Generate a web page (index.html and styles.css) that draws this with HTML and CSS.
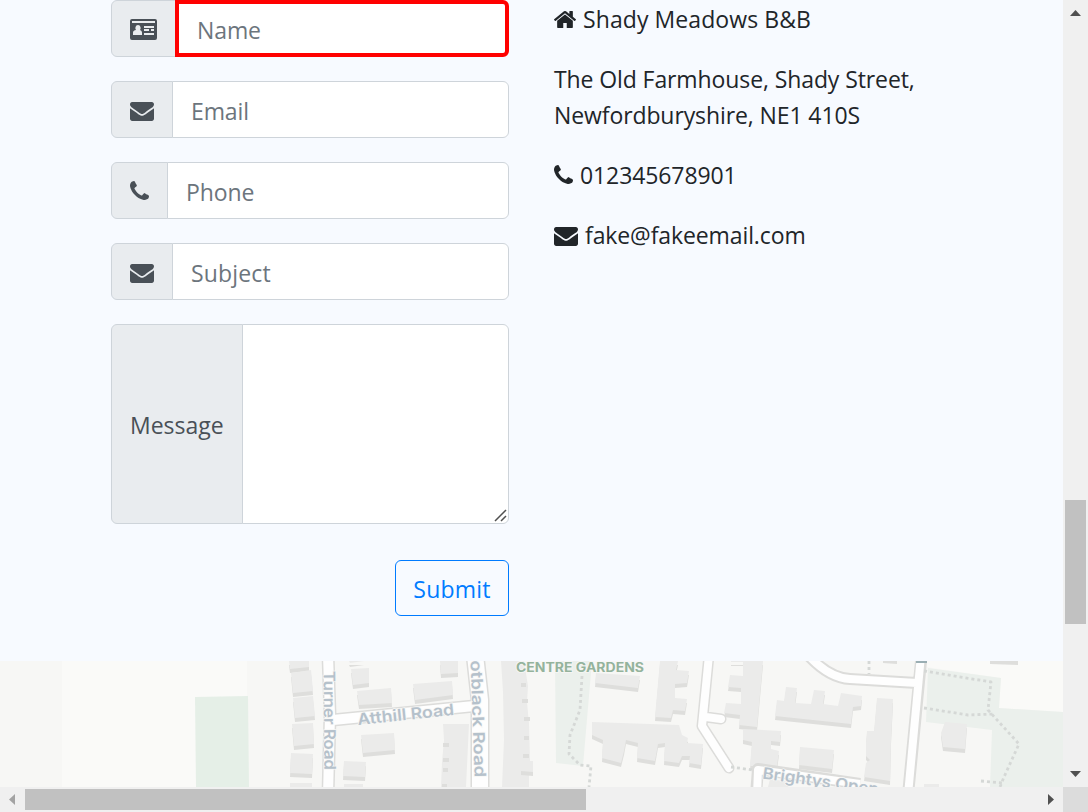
FILE: index.html
```html
<!DOCTYPE html>
<html lang="en">
<head>
<meta charset="utf-8">
<title>Shady Meadows B&amp;B</title>
<link rel="stylesheet" href="styles.css">
</head>
<body>
<svg class="defs" width="0" height="0" aria-hidden="true">
  <symbol id="envelope" viewBox="0 256 1792 1408" preserveAspectRatio="none"><path d="M1792 710v794q0 66-47 113t-113 47h-1472q-66 0-113-47t-47-113v-794q44 49 101 87 362 246 497 345 57 42 92.500 65.500t94.500 48 110 24.500h2q51 0 110-24.500t94.500-48 92.500-65.500q170-123 498-345 57-39 100-87zm0-294q0 79-49 151t-122 123q-376 261-468 325-10 7-42.500 31t-54 38.500-52 32.500-57.500 27-50 9h-2q-23 0-50-9t-57.500-27-52-32.500-54-38.500-42.500-31q-91-64-262-182.500t-205-142.500q-62-42-117-115.500t-55-136.500q0-78 41.500-130t118.500-52h1472q65 0 112.500 47t47.500 113z"/></symbol>
  <symbol id="phone" viewBox="192 128 1408 1408"><path d="M1600 1240q0 27-10 70.500t-21 68.500q-21 50-122 106-94 51-186 51-27 0-53-3.500t-57.500-12.500-47-14.500-55.500-20.500-49-18q-98-35-175-83-127-79-264-216t-216-264q-48-77-83-175-3-9-18-49t-20.500-55.500-14.500-47-12.500-57.500-3.500-53q0-92 51-186 56-101 106-122 25-11 68.500-21t70.500-10q14 0 21 3 18 6 53 76 11 19 30 54t35 63.500 31 53.500q3 4 17.500 25t21.500 35.500 7 28.500q0 20-28.500 50t-62 55-62 53-28.500 46q0 9 5 22.500t8.500 20.500 14 24 11.500 19q76 137 174 235t235 174q2 1 19 11.500t24 14 20.500 8.500 22.500 5q18 0 46-28.500t53-62 55-62 50-28.500q14 0 28.500 7t35.500 21.500 25 17.500q25 15 53.500 31t63.500 35 54 30q70 35 76 53 3 7 3 21z"/></symbol>
  <symbol id="home" viewBox="89 253 1614 1283" preserveAspectRatio="none"><path d="M1472 992v480q0 26-19 45t-45 19h-384v-384h-256v384h-384q-26 0-45-19t-19-45v-480q0-1 .5-3t.5-3l575-474 575 474q1 2 1 6zm223-69l-62 74q-8 9-21 11h-3q-13 0-21-7l-692-577-692 577q-12 8-24 7-13-2-21-11l-62-74q-8-10-7-23.500t11-21.500l719-599q32-26 76-26t76 26l244 204v-195q0-14 9-23t23-9h192q14 0 23 9t9 23v408l219 182q10 8 11 21.500t-7 23.500z"/></symbol>
  <symbol id="card" viewBox="0 0 27 21"><path fill-rule="evenodd" d="M2 0H25Q27 0 27 2V19Q27 21 25 21H2Q0 21 0 19V2Q0 0 2 0ZM2 2V4H25V2ZM3 16H12V13.500Q12 11.500 10 11Q11 10 10.500 8Q10 6 8 6Q6 6 5.500 8Q5 10 6 11Q3 11.500 3 13.500ZM14 7V9H24V7ZM14 10V12H19V10ZM21 10V12H24V10ZM14 14V16H24V14Z"/></symbol>
</svg>
<div class="window">
  <main class="page">
    <section class="contact">
      <form class="form">
        <div class="group"><span class="addon"><svg class="i-card"><use href="#card"/></svg></span><input class="field invalid" type="text" placeholder="Name"></div>
        <div class="group"><span class="addon"><svg class="i-envelope"><use href="#envelope"/></svg></span><input class="field" type="text" placeholder="Email"></div>
        <div class="group"><span class="addon"><svg class="i-phone"><use href="#phone"/></svg></span><input class="field" type="text" placeholder="Phone"></div>
        <div class="group"><span class="addon"><svg class="i-envelope"><use href="#envelope"/></svg></span><input class="field subject" type="text" placeholder="Subject"></div>
        <div class="group message"><span class="addon label">Message</span><textarea class="field"></textarea><svg class="grip" width="13" height="13"><path d="M1 12L12 1M7 12L12 7"/></svg></div>
        <button class="submit" type="button">Submit</button>
      </form>
      <div class="details">
        <p class="brand"><svg class="i-home"><use href="#home"/></svg><span>Shady Meadows B&amp;B</span></p>
        <p class="address">The Old Farmhouse, Shady Street,<br>Newfordburyshire, NE1 410S</p>
        <p class="tel"><svg class="i-phone"><use href="#phone"/></svg><span>012345678901</span></p>
        <p class="mail"><svg class="i-envelope"><use href="#envelope"/></svg><span>fake@fakeemail.com</span></p>
      </div>
    </section>
    <svg class="map" viewBox="0 661 1063 126" width="1063" height="126">
      <rect y="661" width="1063" height="126" fill="#f7f7f5"/>
      <path fill="#fafaf8" d="M62 661H247V787H62ZM927 661H1063V712L999 708L1001 678L927 667Z"/>
      <path fill="#e5efe7" d="M195 697L248 696L249 787H196Z"/>
      <path fill="#ebf0ec" d="M555 661H592L583 766L556 763ZM928 668L1001 678L999 708L1063 712V787H990L992 730L926 722Z"/>
      <!-- building shadows -->
      <g fill="#dededc" transform="translate(0 4)">
        <path id="houses" d="M289 661H309V667L290 669ZM291 673L311 670L313 691L293 693ZM293 698L313 696L315 716L295 718ZM292 724L313 723L314 744L294 746ZM291 753L313 754L312 774L290 773ZM290 783H312V787H290ZM349 661H365L364 661L350 663ZM351 669L369 668V683L353 685ZM357 691L391 688L392 703L359 705ZM413 684L452 681L453 695L415 700ZM440 661H458V673L441 674ZM361 735L394 733L395 750L363 753ZM344 761L366 762L365 777L343 776ZM344 784H363V787H344ZM596 673L640 676L638 688L595 683ZM660 661H678L676 670L689 671L687 683L675 684V698L687 699L685 711L673 710L671 718L655 717ZM731 661H763L757 727L739 725L740 715L724 713L726 703L741 704V688L728 687L730 675L743 676V662H731ZM592 722L679 725L682 735L688 738L687 743L703 744L701 765L689 763L690 756L682 756L679 763L664 761L665 743L658 744L655 761L637 758L638 743L626 740L624 751L621 763L602 758L603 740L592 735ZM743 729L781 731L780 742L771 741V749L779 751L777 766H750L752 742L743 740ZM777 700L784 701L786 687L797 688L795 703L811 704L814 690L825 691L823 704L838 706L841 693L862 696L861 706L853 707L851 724L775 716ZM877 698L893 699L891 740L890 781L864 777L866 763L870 760L866 756V742L867 731H874ZM800 747L834 750L832 769L799 765ZM945 722L967 724L965 749L943 747L941 733Z"/>
      </g>
      <use href="#houses" fill="#ebebea"/>
      <path fill="#ebebea" d="M501 661H524L528 686L527 702L529 724L530 761H533V774H529V787H502L504 740L503 692ZM443 724H469L466 787H441L442 762L444 740ZM924 784H939V787H924ZM770 779L790 782L788 787H768Z"/>
      <path fill="#dededc" d="M521 683h5v4h-5zM522 699h6v4h-6zM524 717h6v4h-6zM524 736h5v4h-5zM523 754h6v4h-6zM521 771l12 1v4l-12-1zM443 743h6v4h-6zM443 758h6v4h-6zM443 768h5v4h-5zM442 784h5v3h-5zM883 661h14v3l-14-1zM990 661h28v4l-28-1z"/>
      <g fill="none" stroke-linejoin="round">
        <path stroke="#dcdcda" stroke-width="13" d="M328 655L330 715L328 795M333 720L474 706"/>
        <path stroke="#dcdcda" stroke-width="19" d="M475 655L480 700L480 795"/>
        <path stroke="#fefefe" stroke-width="10" d="M328 655L330 715L328 795M333 720L474 706"/>
        <path stroke="#fefefe" stroke-width="16" d="M475 655L480 700L480 795"/>
        <path stroke="#dcdcda" stroke-width="11" stroke-linecap="round" d="M709 655L702 726L729 768M706 717L721 719"/>
        <path stroke="#fefefe" stroke-width="8" stroke-linecap="round" d="M709 655L702 726L729 768M706 717L721 719"/>
        <path stroke="#dcdcda" stroke-width="12" d="M808 655Q829 678 850 679L917 683M921 661L908 795M756 795L758 769L860 784"/>
        <path stroke="#fefefe" stroke-width="8" d="M808 655Q829 678 850 679L917 683M921 655L908 795M757 795L758 770L860 784"/>
        <path stroke="#d5d8d6" stroke-width="2.800" stroke-dasharray="3 3" d="M582 676L580 710L570 735L569 754L580 765L591 766L589 787M731 767L753 770M869 661V674M924 671L991 682L988 710L1019 744L1004 777L1000 787M924 708L968 715L994 714M981 781L1004 783"/>
      </g>
      <path d="M916 661h11v2h-11z" fill="#9aaeb3"/>
      <g class="road-label">
        <text x="516" y="671.500" class="garden" textLength="128" lengthAdjust="spacingAndGlyphs">CENTRE GARDENS</text>
        <text transform="translate(358 725) rotate(-6)" textLength="97" lengthAdjust="spacingAndGlyphs">Atthill Road</text>
        <text transform="translate(323.500 671) rotate(89.500)" textLength="99" lengthAdjust="spacingAndGlyphs">Turner Road</text>
        <text transform="translate(470.500 660.500) rotate(88)" textLength="117" lengthAdjust="spacingAndGlyphs">otblack Road</text>
        <text transform="translate(762 778.500) rotate(8)" textLength="117" lengthAdjust="spacingAndGlyphs">Brightys Open</text>
      </g>
    </svg>
  </main>
  <div class="vbar"><svg width="11" height="6"><path d="M0 6L5.500 0L11 6Z"/></svg><div class="vthumb"></div><svg width="11" height="6"><path d="M0 0H11L5.500 6Z"/></svg></div>
  <div class="hbar"><svg class="disabled" width="6" height="11"><path d="M6 0V11L0 5.500Z"/></svg><div class="hthumb"></div><svg width="6" height="11"><path d="M0 0V11L6 5.500Z"/></svg></div>
  <div class="corner"></div>
</div>
</body>
</html>
```
FILE: styles.css
```css
* { box-sizing: border-box; }
body { margin: 0; overflow: hidden; background: #f7faff; color: #212529; font: 23px/36px "Open Sans", "Noto Sans", sans-serif; }
.defs { display: block; height: 0; }
.window { display: grid; grid-template: 787px 25px / 1063px 25px; }
.page { overflow: hidden; }
.contact { height: 661px; display: grid; grid-template-columns: 398px 420px; column-gap: 45px; padding-left: 111px; }
.form { display: flex; flex-direction: column; }
.group { display: flex; height: 57px; margin-bottom: 24px; }
.message { position: relative; height: 200px; margin-bottom: 36px; }
.addon { display: flex; align-items: center; flex: none; padding: 3px 18px 0; color: #495057; background: #e9ecef; border: 1px solid #ced4da; border-radius: 6px 0 0 6px; }
.label { width: 132px; padding-top: 2px; }
.field { flex: 1; min-width: 0; margin: 0 0 0 -1px; padding: 4px 18px 1px; font: inherit; letter-spacing: -.1px; color: #495057; background: #fff; border: 1px solid #ced4da; border-radius: 0 6px 6px 0; outline: 0; resize: none; }
.field::placeholder { color: #6c757d; opacity: 1; }
.subject { letter-spacing: .15px; }
.invalid { border: 4px solid #f00; }
.grip { position: absolute; right: 2px; bottom: 2px; fill: none; stroke: #505050; stroke-width: 1.500px; }
.submit { align-self: flex-end; width: 114px; height: 56px; padding: 2px 0 0; font: inherit; letter-spacing: .2px; color: #007bff; background: transparent; border: 1px solid #007bff; border-radius: 6px; }
.details { padding-top: 1px; }
.details p { margin: 0 0 24px; white-space: nowrap; }
.details .address { letter-spacing: -.1px; }
.tel, .mail { letter-spacing: -.1px; }
.details svg { margin-right: 7px; }
.brand { letter-spacing: .08px; }
svg { fill: currentColor; }
.i-card { width: 27px; height: 21px; }
.i-envelope { width: 24px; height: 19px; }
.i-phone { width: 19px; height: 19px; }
.i-home { width: 22px; height: 17px; }
.addon .i-card { margin-bottom: 1px; }
.addon .i-phone { margin-bottom: 3px; }
.details .i-envelope { vertical-align: -2px; }
.map { display: block; }
.road-label { font: 600 16px Inter, "Open Sans", sans-serif; fill: #b5c1cb; stroke: #f7f7f5; stroke-width: 1.500px; paint-order: stroke; }
.garden { font-size: 12.500px; font-weight: 700; fill: #94b39c; }
.vbar, .hbar { display: flex; align-items: center; background: #f0f0f0; color: #505050; }
.vbar { flex-direction: column; padding-top: 10px; }
.vthumb { width: 21px; height: 124px; margin: 484px 0 147px; background: #c1c1c1; }
.hbar { padding-left: 9px; }
.hthumb { width: 561px; height: 21px; margin: 0 462px 0 10px; background: #c1c1c1; }
.hbar svg, .vbar svg { flex: none; }
.disabled { color: #a3a3a3; }
.corner { background: #dcdcdc; }
```
